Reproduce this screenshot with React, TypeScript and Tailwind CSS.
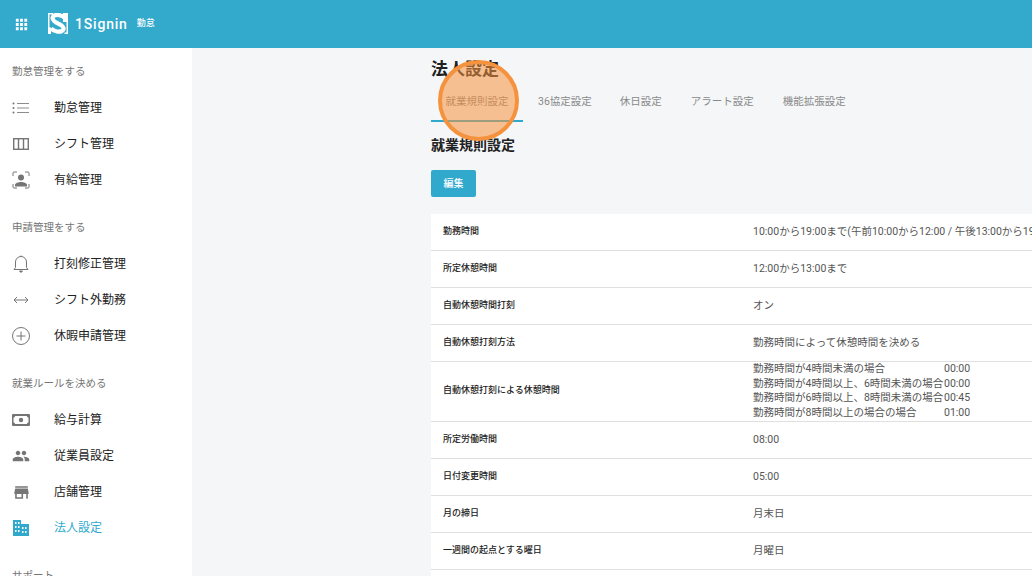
import React from "react";
import { MdApps, MdPeople, MdStore } from "react-icons/md";

const font = { fontFamily: 'Roboto, "Noto Sans CJK JP", sans-serif' };
const G = "#757575";

const ListIcon = () => (
  <svg width="18" height="12" viewBox="0 0 18 12" fill="none" stroke="#8c8c8c" strokeWidth="1">
    <path d="M5 1.500h12M5 6h12M5 10.500h12" />
    <circle cx="1.500" cy="1.500" r="1" fill={G} stroke="none" />
    <circle cx="1.500" cy="6" r="1" fill={G} stroke="none" />
    <circle cx="1.500" cy="10.500" r="1" fill={G} stroke="none" />
  </svg>
);
const ColumnsIcon = () => (
  <svg width="16" height="12" viewBox="0 0 16 12" fill="none" stroke={G} strokeWidth="1.400">
    <rect x="0.700" y="0.700" width="14.600" height="10.600" />
    <path d="M5.500 1v10M10.500 1v10" />
  </svg>
);
const FaceIcon = () => (
  <svg width="18" height="18" viewBox="0 0 18 18" fill="none">
    <path d="M1 5V2a1 1 0 0 1 1-1h3M13 1h3a1 1 0 0 1 1 1v3M1 13v3a1 1 0 0 0 1 1h3M13 17h3a1 1 0 0 0 1-1v-3" stroke={G} strokeWidth="1" />
    <circle cx="9" cy="6.500" r="3" fill={G} />
    <path d="M3 15.500V14c0-2 3.500-3 6-3s6 1 6 3v1.500z" fill={G} />
  </svg>
);
const BellIcon = () => (
  <svg width="16" height="18" viewBox="0 0 16 18" fill="none" stroke={G} strokeWidth="1">
    <path d="M1 14.500h14l-1.500-2V7a5.500 5.500 0 0 0-11 0v5.500z" />
    <path d="M8 .500v1" />
    <path d="M6.500 16h3L8 17.500z" fill={G} />
  </svg>
);
const ArrowsIcon = () => (
  <svg width="16" height="8" viewBox="0 0 16 8" fill="none" stroke={G} strokeWidth="1">
    <path d="M1 4h14M4 1 1 4l3 3M12 1l3 3-3 3" />
  </svg>
);
const PlusCircleIcon = () => (
  <svg width="18" height="18" viewBox="0 0 18 18" fill="none" stroke={G} strokeWidth="1">
    <circle cx="9" cy="9" r="8.500" />
    <path d="M9 4.500v9M4.500 9h9" />
  </svg>
);
const MoneyIcon = () => (
  <svg width="18" height="12" viewBox="0 0 18 12" fill="none">
    <rect x="0" y="0" width="18" height="12" rx="1" fill={G} />
    <path d="M3 2h12c0 1 .8 1.500 1.500 1.500v5c-.7 0-1.500.5-1.500 1.500H3c0-1-.8-1.500-1.500-1.500v-5C2.200 3.500 3 3 3 2z" fill="#ffffff" />
    <circle cx="9" cy="6" r="2.200" fill={G} />
  </svg>
);
const BuildingIcon = () => (
  <svg width="16" height="16" viewBox="0 0 16 16">
    <path fill="#30a9cd" d="M0 0h8v4h8v12H0z" />
    <path fill="#ffffff" d="M2 2h1.500v2H2zM5 2h1.500v2H5zM2 6h1.500v2H2zM5 6h1.500v2H5zM2 10h1.500v2H2zM5 10h1.500v2H5zM9 7h1.500v2H9zM12 7h1.500v2H12zM9 11h1.500v2H9zM12 11h1.500v2H12z" />
  </svg>
);

type Item = { icon: React.ReactNode; label: string; active?: boolean };
const sections: { title: string; items: Item[] }[] = [
  {
    title: "勤怠管理をする",
    items: [
      { icon: <ListIcon />, label: "勤怠管理" },
      { icon: <ColumnsIcon />, label: "シフト管理" },
      { icon: <FaceIcon />, label: "有給管理" },
    ],
  },
  {
    title: "申請管理をする",
    items: [
      { icon: <BellIcon />, label: "打刻修正管理" },
      { icon: <ArrowsIcon />, label: "シフト外勤務" },
      { icon: <PlusCircleIcon />, label: "休暇申請管理" },
    ],
  },
  {
    title: "就業ルールを決める",
    items: [
      { icon: <MoneyIcon />, label: "給与計算" },
      { icon: <MdPeople size={18} color={G} />, label: "従業員設定" },
      { icon: <MdStore size={19} color={G} />, label: "店舗管理" },
      { icon: <BuildingIcon />, label: "法人設定", active: true },
    ],
  },
  { title: "サポート", items: [] },
];

const rows: { k: string; v: React.ReactNode; tall?: boolean }[] = [
  { k: "勤務時間", v: "10:00から19:00まで(午前10:00から12:00 / 午後13:00から19:00)" },
  { k: "所定休憩時間", v: "12:00から13:00まで" },
  { k: "自動休憩時間打刻", v: "オン" },
  { k: "自動休憩打刻方法", v: "勤務時間によって休憩時間を決める" },
  { k: "自動休憩打刻による休憩時間", v: null, tall: true },
  { k: "所定労働時間", v: "08:00" },
  { k: "日付変更時間", v: "05:00" },
  { k: "月の締日", v: "月末日" },
  { k: "一週間の起点とする曜日", v: "月曜日" },
  { k: "", v: "" },
];

const breaks = [
  ["勤務時間が4時間未満の場合", "00:00"],
  ["勤務時間が4時間以上、6時間未満の場合", "00:00"],
  ["勤務時間が6時間以上、8時間未満の場合", "00:45"],
  ["勤務時間が8時間以上の場合の場合", "01:00"],
];

const tabs = ["36協定設定", "休日設定", "アラート設定", "機能拡張設定"];

export default function App() {
  return (
    <div className="h-[576px] w-[1032px] overflow-hidden flex flex-col bg-[#f4f6f8]" style={font}>
      <header className="h-12 shrink-0 bg-[#33a9cc] flex items-center text-white">
        <div className="w-[42px] flex justify-center">
          <MdApps size={17} color="#ffffff" />
        </div>
        <svg className="ml-[6px] mt-[-1px]" width="20" height="21" viewBox="0 0 20 21" fill="none">
          <path fill="#ffffff" d="M0 0h5v1.500H1.500v13H3V21H0zM15 0h5v21h-3.500v-1.500h2V9H15z" />
          <path stroke="#ffffff" strokeWidth="4.200" d="M17 5C14 2 8 1 5.500 3 3.500 5 5 7.500 8 9.500l5 2.500c3 2 3.500 4.500 1 6-2.500 1.200-7.500 1-11-2.500" />
        </svg>
        <span className="ml-[7px] text-[14px] font-medium tracking-[0.8px] leading-none">1Signin</span>
        <span className="ml-[9px] text-[9px] font-medium leading-none mt-[-1px]">勤怠</span>
      </header>
      <div className="flex flex-1 min-h-0">
        <aside className="w-48 shrink-0 bg-white overflow-hidden">
          {sections.map((s) => (
            <div key={s.title} className="pt-[13px] pb-[6px]">
              <div className="h-[22px] pl-3 flex items-center text-[10.500px] text-[#757575]">{s.title}</div>
              <div className="pt-[7px]">
                {s.items.map((it) => (
                  <div key={it.label} className="h-9 flex items-center">
                    <div className="w-[42px] flex justify-center items-center shrink-0">{it.icon}</div>
                    <span className={`ml-3 text-[12px] ${it.active ? "text-[#30a9cd]" : "text-[#212121]"}`}>{it.label}</span>
                  </div>
                ))}
              </div>
            </div>
          ))}
        </aside>
        <main className="flex-1 min-w-0 pl-[239px] overflow-hidden">
          <h1 className="mt-[9px] h-6 text-[17px] leading-6 font-bold text-[#212121]">法人設定</h1>
          <nav className="mt-[5px] flex h-[36px] text-[10.500px] text-[#8a8a8a] w-[601px]">
            <div className="w-[92px] h-[36px] pb-[2px] flex items-center justify-center border-b-2 border-[#30a9cd]">
              <span>就業規則設定</span>
            </div>
            {tabs.map((t, i) => (
              <div key={t} className={`flex items-center h-[32px] ${["ml-[15px]", "ml-[28px]", "ml-[29px]", "ml-[29px]"][i]}`}>{t}</div>
            ))}
          </nav>
          <h2 className="mt-[8px] h-[30px] text-[14px] leading-[30px] font-bold text-[#212121]">就業規則設定</h2>
          <button className="mt-[10px] block w-[45px] h-[27px] rounded-[2px] bg-[#30a9cd] text-white text-[10px] font-medium">編集</button>
          <div className="mt-[17px] bg-white w-[640px]">
            {rows.map((r, i) => (
              <div key={i} className={`flex items-center border-b border-[#e0e0e0] ${r.tall ? "h-[60px]" : "h-[37px]"}`}>
                <div className="w-[322px] pl-3 pb-[1px] shrink-0 text-[9px] font-medium text-[#212121]">{r.k}</div>
                <div className={`text-[10.500px] text-[#555555] whitespace-nowrap ${i > 4 ? "pb-[1px]" : ""}`}>
                  {r.tall ? (
                    <div className="flex flex-col mt-[-1px]">
                      {breaks.map(([a, b]) => (
                        <div key={a} className="flex h-[14.500px] items-center">
                          <span className="w-[191px]">{a}</span>
                          <span>{b}</span>
                        </div>
                      ))}
                    </div>
                  ) : (
                    r.v
                  )}
                </div>
              </div>
            ))}
          </div>
        </main>
      </div>
      <div className="fixed left-[438px] top-[60px] w-[81px] h-[81px] rounded-full border-4 border-[#f5923e] bg-[#f5923e]/55" />
    </div>
  );
}
